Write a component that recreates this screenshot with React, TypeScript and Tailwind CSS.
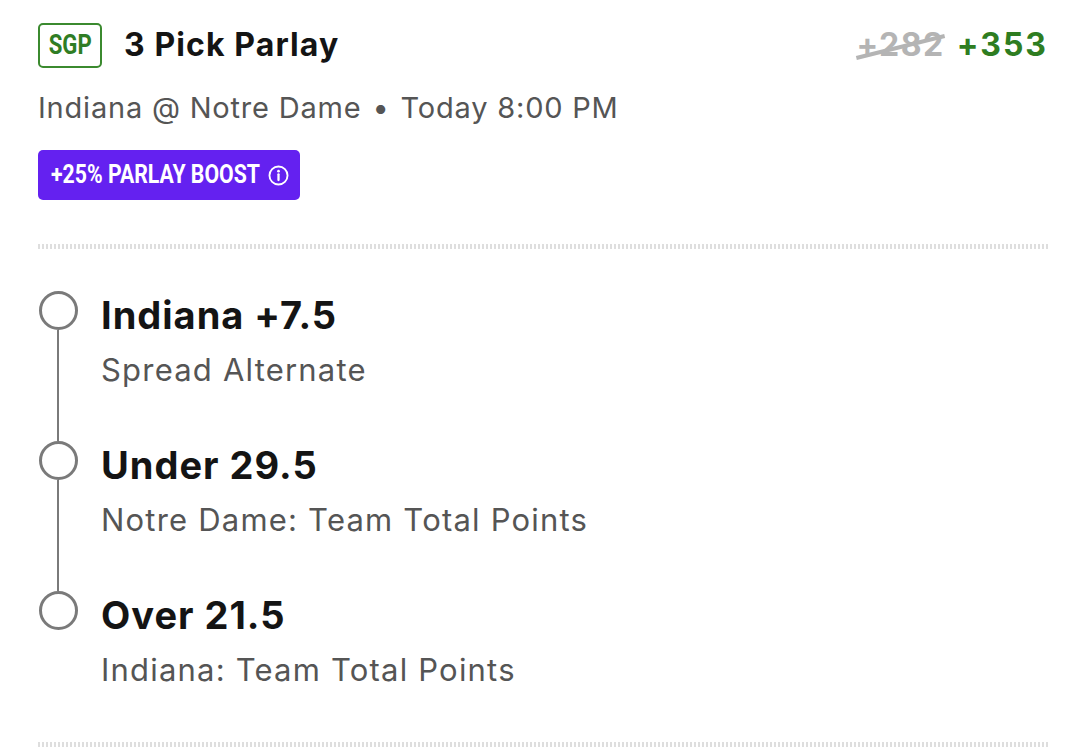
import React from "react";

const legs = [
  { title: "Indiana +7.5", sub: "Spread Alternate" },
  { title: "Under 29.5", sub: "Notre Dame: Team Total Points" },
  { title: "Over 21.5", sub: "Indiana: Team Total Points" },
];

function Divider() {
  return (
    <div className="h-[5px] w-full bg-[repeating-linear-gradient(90deg,#dedede_0_2px,transparent_2px_4px)]" />
  );
}

function InfoIcon() {
  return (
    <svg width="21" height="21" viewBox="0 0 20 20" fill="none">
      <circle cx="10" cy="10" r="8.6" stroke="white" strokeWidth="1.8" />
      <line x1="10" y1="8.9" x2="10" y2="14.3" stroke="white" strokeWidth="2.2" strokeLinecap="round" />
      <circle cx="10" cy="5.9" r="1.3" fill="white" />
    </svg>
  );
}

export default function App() {
  return (
    <div
      className="w-[1090px] h-[756px] bg-white overflow-hidden pl-[38px] pr-[42px]"
      style={{ fontFamily: "Inter, 'Noto Sans', sans-serif" }}
    >
      {/* header */}
      <div className="flex items-center justify-between pt-[21px]">
        <div className="flex items-center gap-[22px]">
          <div
            className="w-[64px] h-[45px] border-[2px] border-[#3b8a2f] rounded-[5px] flex items-center justify-center text-[#2f7d24] text-[27px] font-bold"
            style={{ fontFamily: "Roboto, 'DejaVu Sans', sans-serif" }}
          >
            <span className="inline-block scale-x-[0.82]">SGP</span>
          </div>
          <div className="text-[32px] font-bold text-[#141414] tracking-[1.1px]">3 Pick Parlay</div>
        </div>
        <div className="flex items-center gap-[12px]">
          <span className="relative text-[32px] font-bold text-[#b4b4b4] tracking-[1.5px]">
            +282
            <span className="absolute left-[-2px] right-[-1px] top-[50%] h-[4px] bg-[#b4b4b4] -rotate-[14deg]" />
          </span>
          <span className="text-[32px] font-bold text-[#2e7d21] tracking-[2px]">+353</span>
        </div>
      </div>

      <div className="mt-[19px] text-[29px] text-[#555555] leading-[40px] tracking-[0.8px]">
        Indiana @ Notre Dame <span className="mx-[2px]">•</span> Today 8:00 PM
      </div>

      <div className="mt-[22px] flex items-center h-[50px] w-[262px] pl-[13px] rounded-[5px] bg-[#6421f0] text-white">
        <span className="w-[211px] shrink-0 whitespace-nowrap overflow-visible">
          <span
            className="text-[25px] font-bold leading-none inline-block origin-left scale-x-[0.85]"
            style={{ fontFamily: "Roboto, 'DejaVu Sans', sans-serif" }}
          >
            +25% PARLAY BOOST
          </span>
        </span>
        <span className="ml-[6px] flex">
          <InfoIcon />
        </span>
      </div>

      <div className="mt-[44px]">
        <Divider />
      </div>

      <div className="mt-[42px]">
        {legs.map((leg, i) => (
          <div key={i} className="flex h-[150px]">
            <div className="w-[40px] flex flex-col items-center">
              <div className="w-[39px] h-[39px] rounded-full border-[3px] border-[#7a7a7a] shrink-0" />
              {i < legs.length - 1 && <div className="w-[2px] flex-1 bg-[#7a7a7a]" />}
            </div>
            <div className="ml-[23px] flex flex-col">
              <div className="text-[38px] font-bold text-[#141414] leading-[44px] mt-[2px] tracking-[1px]">
                {leg.title}
              </div>
              <div className="text-[31px] text-[#555555] leading-[40px] mt-[13px] tracking-[1.2px]">
                {leg.sub}
              </div>
            </div>
          </div>
        ))}
      </div>

      <div className="mt-[1px]">
        <Divider />
      </div>
    </div>
  );
}
